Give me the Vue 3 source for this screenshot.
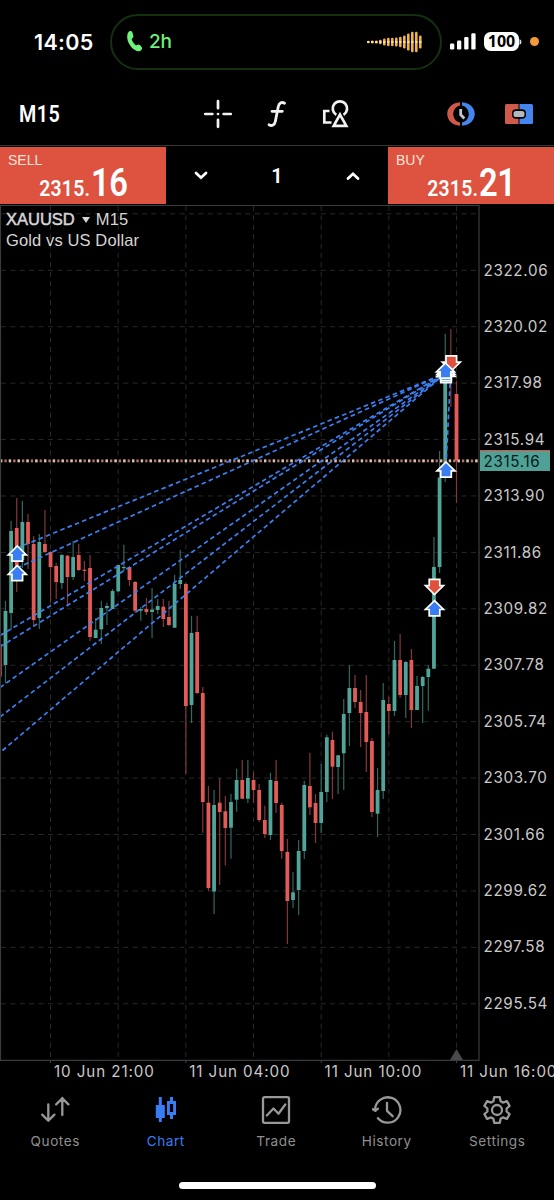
<template>
  <div class="screen">
    <header class="status">
      <span class="status__time">14:05</span>
      <div class="island">
        <svg class="island__phone" width="16" height="23" viewBox="0 0 16 23">
          <path d="M1.200 6.200C1.300 3.400 2.400 1.400 4 1c1.200-.3 2 .3 2.400 1.500l.9 3.200c.3 1.200-.1 2-1.100 2.600-.6.4-.6.9-.3 1.600 1 2.200 2 3.600 3.600 5 .6.5 1.100.5 1.600.1 1-.8 1.900-.8 2.900.1l1.500 1.800c.9.900.9 1.900 0 2.900-1.700 1.900-4.300 2-6.500.3C4.500 17.200 1 11.500 1.200 6.200z" fill="#6df27c" />
        </svg>
        <span class="island__label">2h</span>
        <svg class="island__wave" width="56" height="22" viewBox="0 0 56 22">
          <rect v-for="(h, i) in wave" :key="i" :x="i * 4" :y="11 - h / 2" width="2.600" :height="h" rx="1.200" fill="#eeb443" />
          <rect v-for="(h, i) in wave" :key="'c' + i" :x="i * 4" y="10" width="2.600" height="2" rx="1" fill="#ffe98a" />
        </svg>
      </div>
      <svg class="status__signal" width="26" height="17" viewBox="0 0 26 17" fill="#fff">
        <rect x="0" y="10.500" width="4.300" height="6" rx="1.200" />
        <rect x="7" y="7.500" width="4.300" height="9" rx="1.200" />
        <rect x="14.200" y="4" width="4.300" height="12.500" rx="1.200" />
        <rect x="21.300" y="0.300" width="4.300" height="16.200" rx="1.200" />
      </svg>
      <span class="battery">100</span>
      <svg width="3" height="6" viewBox="0 0 3 6"><path d="M0.500 0Q2.500 1 2.500 3T0.500 6z" fill="#ddd" /></svg>
      <i class="status__dot"></i>
    </header>

    <nav class="toolbar">
      <span class="toolbar__period"><span>M15</span></span>
      <svg class="toolbar__cross" width="30" height="30" viewBox="0 0 30 30" stroke="#f2f2f2" stroke-width="2.700" stroke-linecap="round">
        <path d="M15 2.200v7M15 20.800v7M2.200 15h7.200M20.600 15h7.200M15 15h.01" />
      </svg>
      <svg class="toolbar__func" width="22" height="30" viewBox="0 0 22 30" fill="none" stroke="#f2f2f2" stroke-width="2.800" stroke-linecap="round">
        <path d="M18.600 4.200C15.500 2.600 13 4 12.300 7.500L9.300 22.500C8.600 26 6 27.400 3 25.800M6 12.300h10.300" />
      </svg>
      <svg class="toolbar__shapes" width="28" height="30" viewBox="0 0 28 30" fill="none" stroke="#f2f2f2" stroke-width="2.700">
        <path d="M7.500 12H2.300v11.500h7.200" />
        <path d="M14.300 15.800A7.200 7.200 0 1 1 21.500 15.800" />
        <path d="M18 15.600l6.300 11.200H11.700z" />
      </svg>
      <svg class="toolbar__clock" width="30" height="26" viewBox="0 0 30 26" fill="none">
        <path d="M14 1.300C-3 2.300-3 23.700 14 24.700V21.600C5 19.500 5 6.500 14 4.400z" fill="#cf5a4a" />
        <path d="M16 1.300C33 2.300 33 23.700 16 24.700V21.600C25 19.500 25 6.500 16 4.400z" fill="#4485ee" />
        <path d="M14.700 8v5.800l3.600 3.700" stroke="#c4c7cb" stroke-width="2.800" />
      </svg>
      <svg class="toolbar__order" width="30" height="22" viewBox="0 0 30 22">
        <path d="M2.500 1H14.500V21H2.500Q1 21 1 19.500V2.500Q1 1 2.500 1z" fill="#cf5a4a" />
        <path d="M15.500 1H27.500Q29 1 29 2.500V19.500Q29 21 27.500 21H15.500z" fill="#4485ee" />
        <rect x="8" y="6.300" width="14" height="9.400" rx="4" fill="#000" />
        <rect x="9.500" y="7.900" width="11" height="6.200" rx="2.600" fill="#b4b9bd" />
      </svg>
    </nav>

    <section class="deal">
      <button class="deal__side">
        <span class="deal__label">SELL</span>
        <span class="deal__price">2315.<b>16</b></span>
      </button>
      <div class="deal__volume">
        <svg width="14" height="10" viewBox="0 0 14 10"><path d="M2 2l5 4.700 5-4.700" /></svg>
        <span>1</span>
        <svg width="14" height="10" viewBox="0 0 14 10"><path d="M2 7.500l5-4.700 5 4.700" /></svg>
      </div>
      <button class="deal__side">
        <span class="deal__label">BUY</span>
        <span class="deal__price">2315.<b>21</b></span>
      </button>
    </section>

    <main class="chart">
      <div class="chart__plot">
        <svg width="480" height="860" viewBox="0 205 480 860" fill="none">
          <g stroke="#27282a" stroke-width="1" stroke-dasharray="5 4.400">
            <path v-for="y in rows" :key="'r' + y" :d="`M1 ${y}H479`" />
            <path v-for="x in cols" :key="'c' + x" :d="`M${x} 206V1060`" />
          </g>
          <path v-for="y in ticks" :key="'t' + y" :d="`M479 ${y}h3`" stroke="#3a3a3a" />
          <path v-for="x in timeTicks" :key="'x' + x" :d="`M${x} 1060v3`" stroke="#444" />

          <!-- candles: wick first, body over it -->
          <g v-for="(c, i) in candles" :key="i">
            <path :d="`M${candleX(i)} ${c[1]}V${c[4]}`" :stroke="c[0] ? '#2d6b61' : '#84383a'" stroke-width="1.200" />
            <path :d="`M${candleX(i)} ${c[2]}V${c[3]}`" :stroke="c[0] ? '#51a497' : '#e25b57'" stroke-width="3.800" />
          </g>

          <path d="M0 460.900H479" stroke="#b87868" stroke-width="2.600" stroke-dasharray="2.300 2.100" />
          <path d="M0 460.900H479" stroke="#d3c4b8" stroke-width="2.600" stroke-dasharray="2.300 6.500" />

          <g stroke="#3b80f2" stroke-width="1.700" stroke-dasharray="4.600 3.200">
            <path v-for="(l, i) in deals" :key="'d' + i" :d="`M${l[0]} ${l[1]}L${l[2]} ${l[3]}`" />
          </g>

          <path v-for="(m, i) in marks" :key="'m' + i" :transform="`translate(${m[1]} ${m[2]}) scale(1 ${m[0] ? 1 : -1})`"
                d="M0-8L9 .800H5.300V7.200H-5.300V.800H-9z" :fill="m[0] ? '#397df2' : '#df503d'" stroke="#fff" stroke-width="1.700" />

          <path d="M.5 205.500H479V1060.300H.5z" stroke="#3a3b3c" stroke-width="1.200" />
          <path d="M456.500 1049l6.500 11h-13z" fill="#48494b" />
        </svg>
        <div class="chart__title">
          <p><strong>XAUUSD</strong><i></i>M15</p>
          <p>Gold vs US Dollar</p>
        </div>
      </div>
      <div class="chart__prices">
        <span v-for="p in prices" :key="p">{{ p }}</span>
        <em class="chart__last">2315.16</em>
      </div>
    </main>

    <div class="times">
      <span v-for="t in times" :key="t">{{ t }}</span>
    </div>

    <footer class="tabs">
      <a class="tab">
        <svg width="30" height="30" viewBox="0 0 30 30">
          <path d="M8.300 9.500v16M2.200 19.600l6.100 6.200 6.100-6.200M22.300 20V3M16.200 9.400l6.100-6.200 6.100 6.200" />
        </svg>
        <span>Quotes</span>
      </a>
      <a class="tab tab--active">
        <svg width="30" height="30" viewBox="0 0 30 30" class="tab__solid">
          <path d="M7.800 2h3v8h3v13h-3v4h-3v-4h-3V10h3z" fill="#397df5" />
          <path d="M19 2h3v4h3v14h-3v4h-3v-4h-3V6h3zM18.900 9v8h3.200V9z" fill="#397df5" fill-rule="evenodd" />
        </svg>
        <span>Chart</span>
      </a>
      <a class="tab">
        <svg width="30" height="30" viewBox="0 0 30 30">
          <rect x="2" y="2.200" width="26" height="25.600" rx="1.500" />
          <path d="M5.800 20.500l6.700-7 5 5.200 6.800-9.200" />
        </svg>
        <span>Trade</span>
      </a>
      <a class="tab">
        <svg width="30" height="30" viewBox="0 0 30 30">
          <path d="M3 14.500A12.700 12.700 0 1 1 6 23.200M.800 14.200l2.500 1.700 2.600-2.200M15 7.800v8l5.600 5.400" />
        </svg>
        <span>History</span>
      </a>
      <a class="tab">
        <svg width="30" height="30" viewBox="0 0 30 30">
          <path d="M12.200 2.200h5.600l.8 4 2.300 1.400 4-1.400 2.700 4.600-3 2.700v3l3 2.700-2.700 4.600-4-1.400-2.300 1.400-.8 4h-5.600l-.8-4-2.300-1.400-4 1.400-2.700-4.600 3-2.700v-3l-3-2.700 2.700-4.600 4 1.400 2.300-1.400z" />
          <circle cx="15" cy="15" r="5" />
        </svg>
        <span>Settings</span>
      </a>
    </footer>
    <div class="home"></div>
  </div>
</template>

<script setup>
const wave = [2.6, 2.8, 3.2, 4.5, 7, 8.5, 8.5, 9, 10.5, 13, 17, 20.5, 20.5, 13]

const prices = Array.from({ length: 14 }, (_, i) => (2322.06 - i * 2.04).toFixed(2))
const ticks = prices.map((_, i) => 270.3 + i * 56.42)
const rows = [213.8, ...ticks]
const cols = Array.from({ length: 7 }, (_, i) => 50.5 + i * 67.67)
const timeTicks = [cols[0], cols[2], cols[4], cols[6]]
const times = ['10 Jun 21:00', '11 Jun 04:00', '11 Jun 10:00', '11 Jun 16:00']

const candleX = (i) => +(456.5 - (81 - i) * 5.638).toFixed(2)

// [rising, high, body top, body bottom, low]
const candles = [
  [0, 644, 644, 676.5, 677], [1, 601, 611, 665, 683], [1, 521, 531, 613, 630], [0, 498, 528, 567, 592],
  [1, 501, 522, 560, 568], [0, 514, 522, 544, 569], [0, 536, 544, 620, 627], [1, 534, 542, 618, 629],
  [0, 510, 544, 552, 553], [0, 551, 552, 567, 602], [0, 563, 566, 582, 599], [1, 554, 555, 583, 589],
  [0, 555, 555.7, 577, 605], [1, 541, 557, 577, 580], [0, 544, 555, 570, 571], [0, 561, 569.7, 570.9, 581],
  [0, 555, 568, 637, 641], [1, 618, 629.7, 638, 638], [1, 601, 608, 629.3, 644], [1, 602.7, 606, 608, 625],
  [1, 589, 591, 609, 609], [1, 565, 565, 591.3, 592], [1, 544.7, 567, 568.2, 571], [0, 566, 567, 580, 586],
  [0, 581, 582, 610.7, 613], [1, 607, 609, 610.7, 620.7], [0, 598, 609, 612, 615], [1, 588, 609.5, 612, 638],
  [1, 599, 606, 610, 614], [0, 599, 606.7, 619, 627], [0, 601, 617, 625, 626], [1, 575, 584, 627.7, 628],
  [1, 550, 580, 584, 589], [0, 583, 584, 706, 774], [1, 616, 633, 705, 723], [0, 616, 632, 693, 694],
  [0, 687, 693, 802, 832.7], [0, 786, 802.7, 888, 890.7], [1, 790, 805, 891.5, 914], [0, 778, 802.7, 812, 885],
  [0, 796, 811.3, 828, 865.5], [1, 794, 802, 827.7, 858.7], [1, 768.7, 780, 799.7, 811.7], [0, 760, 780, 798.7, 799],
  [1, 760, 778, 798.7, 803], [0, 772, 780, 790, 802.7], [0, 784, 790, 820, 822], [0, 805.7, 820, 834, 838],
  [1, 772.7, 780, 835, 840], [0, 760, 781, 803, 813], [0, 802.7, 805, 851, 858.7], [0, 839, 852, 901, 944],
  [1, 872, 892.3, 900, 908], [1, 840, 851, 890, 915], [1, 780.7, 785, 851, 859], [0, 752.7, 786, 807.3, 815],
  [0, 794, 803, 823, 843], [1, 764, 792, 823, 833], [1, 734.7, 737.3, 792, 802], [0, 731.7, 740, 766.7, 799],
  [1, 755, 755.3, 767, 794], [1, 699, 714, 753.3, 790], [1, 665, 688, 713, 746], [0, 675, 688, 702, 708],
  [0, 690, 702, 713, 747], [0, 675, 712, 742, 772], [0, 738, 741, 812, 817], [1, 768, 790, 813.7, 837],
  [1, 683, 700, 791, 799], [0, 696.7, 704, 711, 734], [1, 641, 660, 711, 716], [0, 634, 660, 695, 697.7],
  [1, 661, 662, 695, 718], [0, 649, 660, 710, 728], [1, 676, 686, 710, 710], [1, 676, 677, 686, 723],
  [1, 665, 668.7, 677, 710.7], [1, 537, 567, 668.7, 669], [1, 451, 477.5, 567, 573], [1, 334, 376, 478, 482],
  [0, 329, 370, 376, 407], [0, 381, 394, 460.7, 503]
]

// closed positions, entry to exit
const deals = [
  [17, 548, 446, 373],
  [17, 568, 446, 373],
  [0, 635.5, 446, 373],
  [0, 646.8, 446, 373],
  [0, 687.5, 446, 373],
  [0, 717, 446, 373],
  [2.5, 750.5, 446, 373],
  [446, 466, 451, 366]
]

// [buy, x, y]
const marks = [
  [1, 17.3, 554],
  [1, 17.3, 573.5],
  [0, 434.5, 586.5],
  [1, 434.5, 608.7],
  [1, 446, 470],
  [1, 446, 375.5],
  [1, 446, 373.5],
  [0, 451.3, 363],
  [1, 445.5, 371]
]
</script>

<style>
body {
  background: #000;
}
</style>

<style scoped>
.screen {
  width: 554px;
  height: 1200px;
  overflow: hidden;
  display: flex;
  flex-direction: column;
  background: #000;
  color: #fff;
  font-family: Inter, 'Liberation Sans', sans-serif;
}
.status {
  height: 83px;
  display: flex;
  align-items: center;
  box-sizing: border-box;
}
.status__time {
  width: 76px;
  padding-left: 34px;
  font-size: 21.5px;
  font-weight: 600;
  letter-spacing: 0.3px;
}
.island {
  width: 332px;
  height: 56px;
  box-sizing: border-box;
  border: 2px solid #14300f;
  border-radius: 28px;
  padding: 0 17px 0 14px;
  display: flex;
  align-items: center;
}
.island__label {
  margin-left: 7px;
  color: #6df27c;
  font-size: 19px;
  font-weight: 500;
  letter-spacing: -0.3px;
}
.island__wave {
  margin-left: auto;
}
.status__signal {
  margin: 0 8px 0 8px;
}
.battery {
  width: 35px;
  height: 19px;
  border-radius: 6.5px;
  background: #fff;
  color: #000;
  font: 700 16px/19px 'Open Sans', sans-serif;
  text-align: center;
}
.status__dot {
  width: 9px;
  height: 9px;
  margin-left: 8px;
  border-radius: 50%;
  background: #f29b38;
}
.toolbar {
  height: 62px;
  display: flex;
  align-items: center;
}
.toolbar__period {
  width: 184px;
  padding-left: 19px;
  font-family: Roboto, sans-serif;
  font-size: 23.5px;
  font-weight: 600;
}
.toolbar__period span {
  display: inline-block;
  letter-spacing: 0.6px;
  transform: scaleX(0.84);
  transform-origin: left;
}
.toolbar__func {
  margin-left: 33px;
}
.toolbar__shapes {
  margin-left: 34px;
}
.toolbar__clock {
  margin-left: 96px;
}
.toolbar__order {
  margin-left: 28px;
}
.deal {
  height: 60px;
  box-sizing: border-box;
  border-top: 1px solid #353535;
  padding: 1px 0;
  display: flex;
}
.deal__side {
  width: 166px;
  border: 0;
  padding: 4px 8px 0;
  display: flex;
  flex-direction: column;
  align-items: flex-start;
  background: #de5340;
  color: #fff;
}
.deal__label {
  font: 14px/18px 'Liberation Sans', sans-serif;
  color: #fbe3de;
}
.deal__price {
  align-self: center;
  margin-top: -4px;
  font: 600 22.5px/36px Roboto, sans-serif;
  letter-spacing: 0.3px;
  transform: scaleX(0.86);
}
.deal__price b {
  margin-left: 1px;
  font-size: 38px;
  font-weight: 600;
  letter-spacing: -0.5px;
}
.deal__volume {
  width: 222px;
  box-sizing: border-box;
  padding: 0 28px 0 28px;
  display: flex;
  align-items: center;
  justify-content: space-between;
  font: 600 20px Roboto, sans-serif;
}
.deal__volume path {
  fill: none;
  stroke: #fff;
  stroke-width: 2.8;
  stroke-linecap: round;
}
.chart {
  height: 856px;
  display: flex;
}
.chart__plot {
  position: relative;
  width: 480px;
}
.chart__plot svg {
  display: block;
}
.chart__title {
  position: absolute;
  left: 6px;
  top: 4px;
  font: 16.5px/21px 'Liberation Sans', sans-serif;
  letter-spacing: 0.12px;
  color: #d6d6d6;
}
.chart__title p {
  margin: 0;
}
.chart__title strong {
  font-weight: 400;
  letter-spacing: 0;
  -webkit-text-stroke: 0.5px #d6d6d6;
}
.chart__title i {
  display: inline-block;
  margin: 0 6px 2px 7px;
  border: 4px solid transparent;
  border-top: 6px solid #d6d6d6;
  border-bottom: 0;
}
.chart__prices {
  position: relative;
  flex: 1;
  padding-top: 37.6px;
  display: flex;
  flex-direction: column;
  font-size: 15.2px;
  letter-spacing: 0.65px;
  color: #c9c9c9;
}
.chart__prices span {
  flex: 0 0 56.42px;
  height: 56.42px;
  padding-left: 3.5px;
  line-height: 56.42px;
}
.chart__last {
  position: absolute;
  left: 0;
  top: 245px;
  width: 66px;
  height: 20px;
  padding-left: 3.5px;
  border-top: 1px solid #de5340;
  background: #4fa196;
  color: #0c1a18;
  font-style: normal;
  line-height: 21px;
}
.times {
  height: 20px;
  padding-left: 54px;
  display: flex;
  font-size: 15.2px;
  line-height: 22px;
  letter-spacing: 0.9px;
  white-space: nowrap;
  color: #c9c9c9;
}
.times span {
  flex: 0 0 135.3px;
}
.tabs {
  height: 101px;
  padding: 14px 1.5px 0 0;
  box-sizing: border-box;
  display: flex;
}
.tab {
  flex: 1;
  display: flex;
  flex-direction: column;
  align-items: center;
  font-size: 13.6px;
  line-height: 17px;
  letter-spacing: 0.55px;
  color: #8f8f91;
}
.tab svg {
  margin-bottom: 8px;
  fill: none;
  stroke: #98989a;
  stroke-width: 2.3;
  stroke-linecap: round;
  stroke-linejoin: round;
}
.tab .tab__solid {
  stroke: none;
}
.tab--active {
  color: #397df5;
}
.home {
  width: 197px;
  height: 7px;
  margin: 0 auto;
  border-radius: 4px;
  background: #fff;
}
</style>
